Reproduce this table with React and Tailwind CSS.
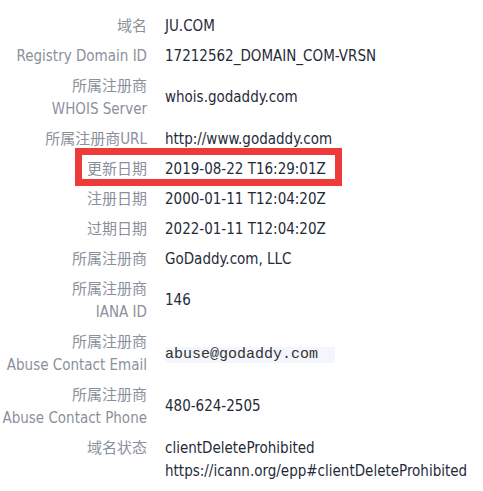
import React from "react";

const rows = [
  { label: ["域名"], value: ["JU.COM"] },
  { label: ["Registry Domain ID"], value: ["17212562_DOMAIN_COM-VRSN"] },
  { label: ["所属注册商", "WHOIS Server"], value: ["whois.godaddy.com"] },
  { label: ["所属注册商URL"], value: ["http://www.godaddy.com"] },
  { label: ["更新日期"], value: ["2019-08-22 T16:29:01Z"], marked: true },
  { label: ["注册日期"], value: ["2000-01-11 T12:04:20Z"] },
  { label: ["过期日期"], value: ["2022-01-11 T12:04:20Z"] },
  { label: ["所属注册商"], value: ["GoDaddy.com, LLC"] },
  { label: ["所属注册商", "IANA ID"], value: ["146"] },
  { label: ["所属注册商", "Abuse Contact Email"], value: ["abuse@godaddy.com"], mono: true },
  { label: ["所属注册商", "Abuse Contact Phone"], value: ["480-624-2505"] },
  {
    label: ["域名状态"],
    value: ["clientDeleteProhibited", "https://icann.org/epp#clientDeleteProhibited"],
    top: true,
  },
];

function Row({ row }) {
  return (
    <div
      className={`relative grid grid-cols-[147px_1fr] gap-x-[18px] py-[3.5px] ${
        row.top ? "items-start" : "items-center"
      }`}
    >
      {row.marked && (
        <div className="absolute left-[75px] top-[-6px] h-[38px] w-[267px] border-[7px] border-[#ef3a3a]" />
      )}
      <div className="text-right text-[#8a919b]">
        {row.label.map((l) => (
          <div key={l}>{l}</div>
        ))}
      </div>
      <div className="text-[#1f2b3a]">
        {row.mono ? (
          <span className="inline-block w-[170px] bg-[#f3f6fc] font-['Liberation_Mono',monospace] text-[15px] leading-[16px] text-[#333]">
            {row.value[0]}
          </span>
        ) : (
          row.value.map((v) => <div key={v}>{v}</div>)
        )}
      </div>
    </div>
  );
}

export default function App() {
  return (
    <div className="min-h-screen bg-white pt-[11px] font-['DejaVu_Sans_Condensed','Noto_Sans_CJK_SC',sans-serif] text-[15px] leading-[23px]">
      {rows.map((row, i) => (
        <Row key={i} row={row} />
      ))}
    </div>
  );
}
